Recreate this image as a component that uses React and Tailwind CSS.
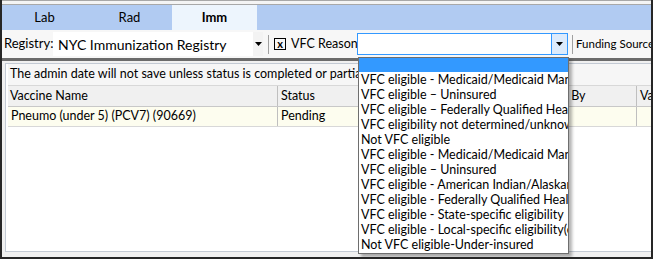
import { useState } from "react";

const font = { fontFamily: '"Lato", "Noto Sans", sans-serif' };

const tabs = ["Lab", "Rad", "Imm"];

const vfcOptions = [
  "",
  "VFC eligible - Medicaid/Medicaid Managed Care",
  "VFC eligible – Uninsured",
  "VFC eligible – Federally Qualified Health Center",
  "VFC eligibility not determined/unknown",
  "Not VFC eligible",
  "VFC eligible - Medicaid/Medicaid Managed Care",
  "VFC eligible – Uninsured",
  "VFC eligible - American Indian/Alaskan Native",
  "VFC eligible - Federally Qualified Health Center",
  "VFC eligible - State-specific eligibility",
  "VFC eligible - Local-specific eligibility(e.g. county)",
  "Not VFC eligible-Under-insured",
];

function Arrow() {
  return (
    <svg width="7" height="4" viewBox="0 0 7 4">
      <path d="M0 0h7L3.5 4z" fill="#000" />
    </svg>
  );
}

export default function App() {
  const [active] = useState("Imm");
  const [highlight] = useState(0);

  return (
    <div
      className="relative w-[653px] h-[259px] overflow-hidden bg-[#f0f0f0] text-black border-l-2 border-r-2 border-b-2 border-[#262626] flex flex-col text-[13px]"
      style={font}
    >
      {/* window top edge */}
      <div className="h-[5px] shrink-0 border-t border-[#a8a8a8] border-b border-[#7a7a7a] bg-[#f4f4f4]" />

      {/* tabs */}
      <div className="h-[25px] shrink-0 flex bg-[#b1cbf2]">
        {tabs.map((t) => (
          <div
            key={t}
            className={
              "w-[85px] flex items-center justify-center " +
              (t === active ? "bg-[#edf5fd] font-bold" : "")
            }
          >
            {t}
          </div>
        ))}
      </div>

      {/* toolbar */}
      <div className="h-[28px] shrink-0 flex items-center bg-[#f7f7f7] whitespace-nowrap">
        <span className="pl-[2px] w-[51px] shrink-0">Registry:</span>
        <div className="h-[24px] w-[210px] shrink-0 flex items-center bg-white pl-[5px]">
          <span className="flex-1 text-[14px]">NYC Immunization Registry</span>
          <div className="w-[10px] h-full flex items-center justify-center bg-[#f3f3f3]">
            <Arrow />
          </div>
        </div>
        <div className="ml-[5px] mr-[5px] w-px h-[19px] shrink-0 bg-[#a0a0a0]" />
        <div className="w-[12px] h-[12px] shrink-0 border border-black flex items-center justify-center text-[11px] leading-none font-bold pb-px">
          x
        </div>
        <span className="ml-[5px] w-[66px] shrink-0 text-[12.5px]">VFC Reason</span>
        <div className="h-[22px] w-[211px] shrink-0 flex border border-[#3399ff] bg-white">
          <div className="flex-1" />
          <div className="w-[16px] h-full flex items-center justify-center bg-[#dcebfc] border-l border-[#3399ff]">
            <Arrow />
          </div>
        </div>
        <div className="ml-[4px] mr-[3px] w-px h-[19px] shrink-0 bg-[#a0a0a0]" />
        <span className="text-[11.5px]">Funding Source</span>
      </div>

      {/* splitter */}
      <div className="h-[3px] shrink-0 bg-[#6b6b6b]" />

      {/* content panel */}
      <div className="flex-1 px-[3px] pt-[2px] pb-[5px] flex">
        <div className="flex-1 bg-white border border-[#c3cad4] flex flex-col pl-[2px] text-[12.5px]">
          <div className="h-[22px] shrink-0 flex items-center px-[2px] bg-[#f6f6f6] border-b border-[#d8d8d8] whitespace-nowrap">
            The admin date will not save unless status is completed or partially administered.
          </div>
          <div className="h-[21px] shrink-0 flex bg-[#f0f0f0] border-b border-[#c8c8c8] whitespace-nowrap">
            <div className="w-[270px] shrink-0 px-[2px] flex items-center border-r border-[#bfbfbf]">Vaccine Name</div>
            <div className="w-[216px] shrink-0 px-[3px] flex items-center border-r border-[#bfbfbf]">Status</div>
            <div className="w-[143px] shrink-0 pl-[1px] flex items-center border-r border-[#bfbfbf]">Administered By</div>
            <div className="flex-1 px-[3px] flex items-center overflow-hidden">Va</div>
          </div>
          <div className="h-[20px] shrink-0 flex bg-[#fdfdef] border-b border-[#d8d8d8] whitespace-nowrap">
            <div className="w-[270px] shrink-0 px-[3px] flex items-center border-r border-[#bfbfbf]">Pneumo (under 5) (PCV7) (90669)</div>
            <div className="w-[216px] shrink-0 px-[3px] flex items-center border-r border-[#bfbfbf]">Pending</div>
            <div className="w-[143px] shrink-0 border-r border-[#bfbfbf]" />
            <div className="flex-1" />
          </div>
        </div>
      </div>

      {/* open dropdown list */}
      <div className="absolute left-[356px] top-[57px] w-[211px] bg-white border border-[#6e6e6e] shadow-[3px_3px_3px_rgba(0,0,0,0.3)] overflow-hidden text-[12.5px] pb-[1px]">
        {vfcOptions.map((o, i) => (
          <div
            key={i}
            className={
              "whitespace-nowrap pl-[2px] leading-[16px] " +
              (i === highlight ? "h-[14px] bg-[#3399ff] text-white" : "h-[15px]")
            }
          >
            {o}
          </div>
        ))}
      </div>
    </div>
  );
}
